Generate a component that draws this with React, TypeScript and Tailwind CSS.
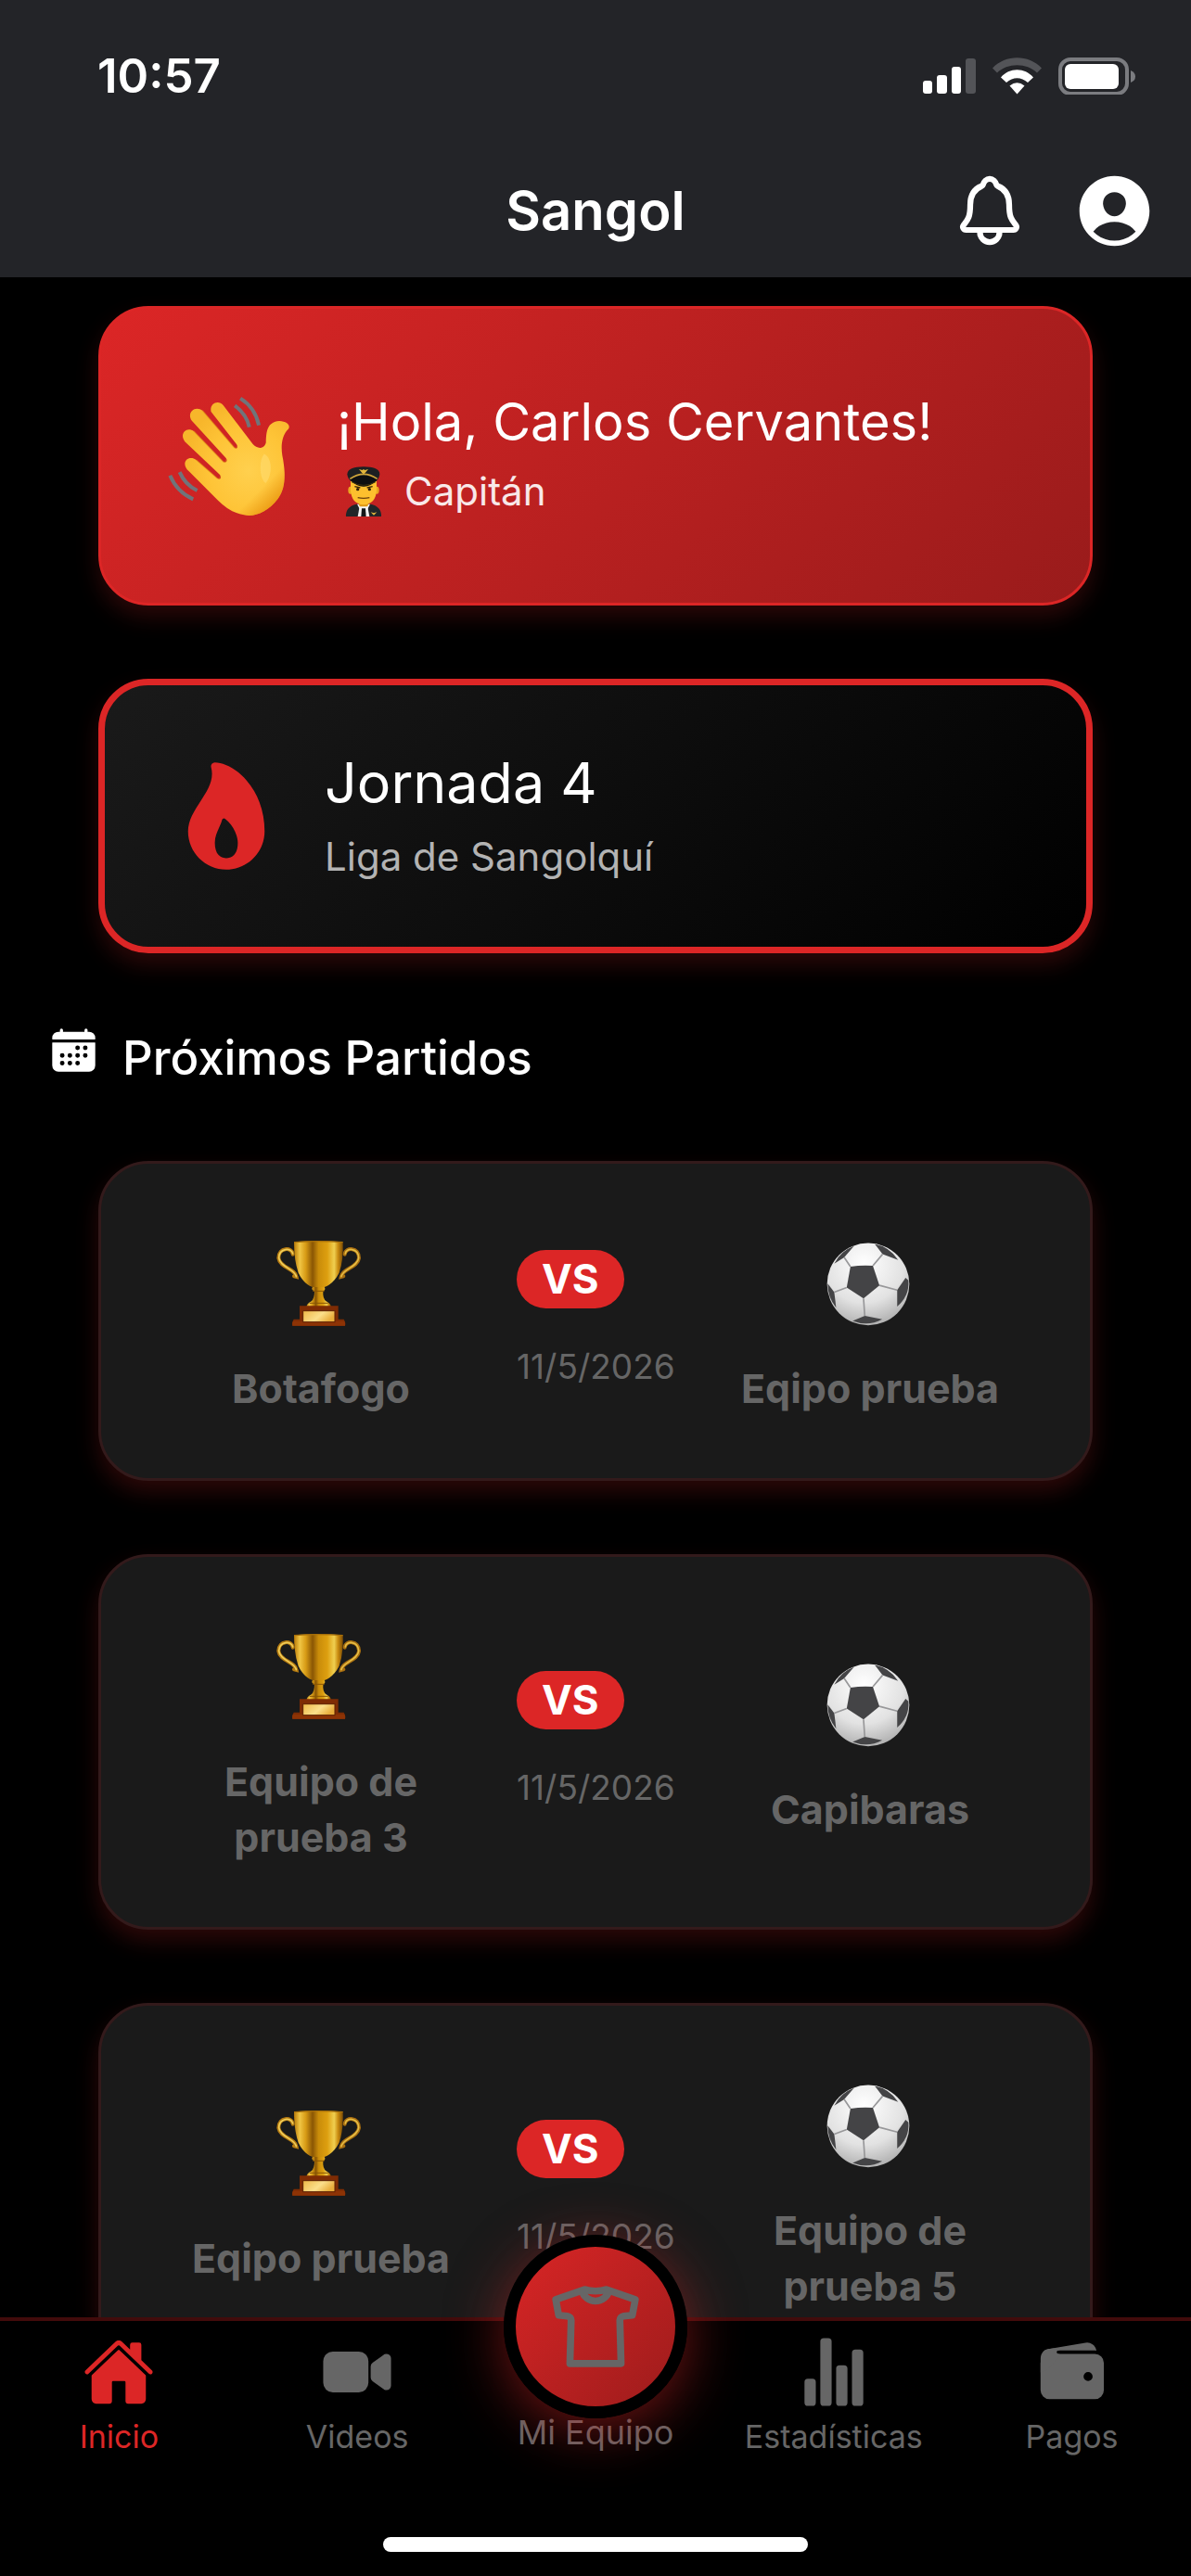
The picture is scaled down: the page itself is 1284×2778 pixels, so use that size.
import type {ComponentType} from 'react';
import {
  IoCalendar,
  IoFlame,
  IoHome,
  IoNotificationsOutline,
  IoPersonCircle,
  IoShirtOutline,
  IoStatsChart,
  IoVideocam,
  IoWallet,
} from 'react-icons/io5';

type Match = {
  id: number;
  home: string;
  away: string;
  date: string;
};

const matches: Match[] = [
  {id: 1, home: 'Botafogo', away: 'Eqipo prueba', date: '11/5/2026'},
  {id: 2, home: 'Equipo de prueba 3', away: 'Capibaras', date: '11/5/2026'},
  {id: 3, home: 'Eqipo prueba', away: 'Equipo de prueba 5', date: '11/5/2026'},
];

function StatusIcons() {
  return (
    <svg viewBox="0 0 230 40" className="w-[230px] h-10" aria-hidden="true">
      <g fill="#fff">
        <rect x="1" y="25" width="10" height="14" rx="3" />
        <rect x="16" y="19" width="11" height="20" rx="3" />
        <rect x="32" y="10" width="10" height="29" rx="3" />
        <rect x="47" y="1" width="11" height="38" rx="3" fill="#535458" />
      </g>
      <path
        d="M76 11.5 C90 -3.500 115 -3.500 129 11.500 L124 16.500 C113 5.500 92 5.500 81 16.500 Z"
        fill="#535458"
      />
      <path
        d="M85 21.500 C94 10.500 111 10.500 120 21.500 L114 27 C107 20.500 98 20.500 91 27 Z"
        fill="#fff"
      />
      <path d="M94.500 30.500 Q102.500 24 110.500 30.500 L102.500 39.500 Z" fill="#fff" />
      <rect x="149" y="2" width="72" height="37" rx="11" fill="none" stroke="#7b7c80" strokeWidth="4" />
      <rect x="154" y="7" width="58" height="27" rx="6" fill="#fff" />
      <path d="M225 14 Q230 16 230 20.500 Q230 25 225 27 Z" fill="#7b7c80" />
    </svg>
  );
}

function WavingHand() {
  return (
    <svg viewBox="60 75 400 395" className="w-[133px] h-[132px] shrink-0" role="img" aria-label="Hola">
      <defs>
        <radialGradient id="skin" cx="0.62" cy="0.6" r="0.62">
          <stop offset="0" stopColor="#ffd04e" />
          <stop offset="0.6" stopColor="#fec437" />
          <stop offset="1" stopColor="#f7b62b" />
        </radialGradient>
        <linearGradient id="palm" x1="0.4" y1="0.4" x2="0.85" y2="1">
          <stop offset="0.5" stopColor="#e38a05" stopOpacity="0" />
          <stop offset="1" stopColor="#e38a05" />
        </linearGradient>
      </defs>
      <path
        d="M203 128 C197 101 227 88 243 108 L338 233 C352 250 376 250 381 228 C382 190 385 162 424 158 C450 159 461 172 454 184 C432 205 429 240 434 270 C445 325 446 375 420 410 C385 455 345 470 310 463 C280 459 250 440 225 415 L125 315 C106 291 130 267 156 285 L222 343 C232 351 240 342 230 331 L118 225 C99 200 123 174 148 192 L242 290 C251 296 259 288 250 277 L140 157 C123 130 152 106 176 125 L278 244 C287 251 292 244 286 234 Z"
        fill="url(#skin)"
      />
      <path
        d="M381 228 C382 190 385 162 424 158 C450 159 461 172 454 184 C432 205 429 240 434 270 C445 325 446 375 420 410 C385 455 345 470 310 463 C280 459 250 440 225 415 L250 277 Z"
        fill="url(#palm)"
      />
      <path d="M375 265 C400 275 405 330 380 360 C362 350 355 290 375 265Z" fill="#ffdc70" opacity="0.6" />
      <g fill="none" stroke="#dd8d12" strokeWidth="4" opacity="0.45" strokeLinecap="round">
        <path d="M176 125 L278 244 Q287 250 287 240" />
        <path d="M148 192 L242 290 Q251 295 252 284" />
        <path d="M156 285 L222 343 Q232 350 233 338" />
      </g>
      <g fill="none" stroke="#70747a" strokeWidth="12">
        <path d="M298 85 Q346 115 358 172" />
        <path d="M280 108 Q319 138 327 178" />
        <path d="M70 335 Q92 388 145 412" />
        <path d="M101 324 Q119 365 158 384" />
      </g>
    </svg>
  );
}

function Pilot() {
  return (
    <svg viewBox="612 310 174 165" className="w-[58px] h-[55px] shrink-0" aria-hidden="true">
      <path d="M642 472 Q640 440 676 432 H722 Q758 440 756 472 Z" fill="#222629" />
      <path d="M678 432 L699 472 L720 432 Z" fill="#f4f4f4" />
      <path d="M686 440 L680 472 H718 L712 440 Z" fill="#f4f4f4" />
      <path d="M693 446 H705 L707 472 H691 Z" fill="#15181a" />
      <rect x="684" y="420" width="30" height="20" rx="8" fill="#e09a16" />
      <ellipse cx="656" cy="387" rx="7" ry="12" fill="#eba61f" />
      <ellipse cx="742" cy="387" rx="7" ry="12" fill="#eba61f" />
      <path d="M657 355 H741 V388 Q738 432 699 434 Q660 432 657 388 Z" fill="#fdc02e" />
      <path d="M646 336 Q646 312 699 311 Q752 312 751 336 Q748 352 738 359 H660 Q649 352 646 336 Z" fill="#1d2022" />
      <path d="M656 354 Q699 325 742 354 Q720 376 699 375 Q678 376 656 354 Z" fill="#0d0f10" />
      <path d="M655 350 Q699 320 743 350" fill="none" stroke="#cfa53a" strokeWidth="5" />
      <path d="M660 360 Q699 382 738 360" fill="none" stroke="#3c3210" strokeWidth="3" />
      <path d="M684 319 L695 322 L699 319 L703 322 L714 319 L704 331 L699 335 L694 331 Z" fill="#e2b63c" />
      <g stroke="#3a2708" strokeWidth="4" fill="none">
        <path d="M670 375 L688 379" />
        <path d="M710 379 L728 375" />
      </g>
      <circle cx="680" cy="384" r="5" fill="#35220a" />
      <circle cx="718" cy="384" r="5" fill="#35220a" />
      <path d="M680 411 Q699 415 718 411" stroke="#6b3f0c" strokeWidth="4" fill="none" />
      <path d="M722 458 L732 461 L742 458 L732 468 Z" fill="#e2b63c" />
    </svg>
  );
}

function Trophy() {
  return (
    <svg viewBox="85 83 276 282" className="w-[92px] h-[94px]" aria-hidden="true">
      <defs>
        <linearGradient id="cup" x1="0" x2="1">
          <stop offset="0" stopColor="#b97a08" />
          <stop offset="0.12" stopColor="#f0c544" />
          <stop offset="0.24" stopColor="#d79b15" />
          <stop offset="0.38" stopColor="#8a5604" />
          <stop offset="0.5" stopColor="#c98c0a" />
          <stop offset="0.68" stopColor="#dd9f10" />
          <stop offset="0.82" stopColor="#f0cf50" />
          <stop offset="0.9" stopColor="#c98b10" />
          <stop offset="1" stopColor="#7c4c05" />
        </linearGradient>
        <linearGradient id="plaque" x1="0" x2="1" y2="0.4">
          <stop offset="0" stopColor="#eeb947" />
          <stop offset="0.6" stopColor="#fbdf8b" />
          <stop offset="1" stopColor="#e9ae3c" />
        </linearGradient>
      </defs>
      <g fill="none" strokeLinecap="round">
        <path d="M138 130 C136 106 92 106 92 142 C96 174 146 176 150 203 L142 201" stroke="#b57b12" strokeWidth="12" />
        <path d="M138 128 C134 108 94 108 93 142 C97 172 146 178 149 202" stroke="#f0cd58" strokeWidth="5" />
        <path d="M306 130 C308 106 352 106 352 142 C348 174 298 176 294 203 L302 201" stroke="#a96f10" strokeWidth="12" />
        <path d="M308 128 C310 108 350 108 351 142 C347 172 298 178 295 202" stroke="#e6bd45" strokeWidth="5" />
      </g>
      <path d="M142 90 Q221 84 300 90 Q302 150 288 190 Q262 238 221 239 Q180 238 156 190 Q142 150 142 90 Z" fill="url(#cup)" />
      <path d="M142 91 Q221 85 300 91" fill="none" stroke="#a97009" strokeWidth="4" />
      <path
        d="M202 236 H240 Q246 244 236 250 Q234 272 246 282 Q262 290 262 302 H182 Q182 290 198 282 Q208 272 208 250 Q196 244 202 236 Z"
        fill="url(#cup)"
      />
      <path d="M203 249 H240 M192 288 H252" stroke="#8a5606" strokeWidth="3" />
      <path d="M160 297 H285 V340 H303 Q310 352 307 361 H137 Q134 352 141 340 H160 Z" fill="#7e2c04" />
      <path d="M137 361 Q134 353 139 346 H305 Q309 353 307 361 Z" fill="#8d3305" />
      <rect x="171" y="313" width="103" height="36" fill="url(#plaque)" stroke="#5c2003" strokeWidth="3" />
    </svg>
  );
}

function SoccerBall() {
  return (
    <svg viewBox="63 88 268 270" className="w-[90px] h-[91px]" aria-hidden="true">
      <defs>
        <radialGradient id="leather" cx="0.45" cy="0.25" r="0.8">
          <stop offset="0" stopColor="#fff" />
          <stop offset="0.6" stopColor="#e2e2e2" />
          <stop offset="1" stopColor="#a9a9a9" />
        </radialGradient>
      </defs>
      <circle cx="197" cy="224" r="132" fill="url(#leather)" />
      <g fill="#444446">
        <path d="M140 168 Q176 162 212 165 L233 228 L182 270 L128 235 Z" />
        <path d="M152 101 L120 138 L88 158 Q108 118 152 101 Z" />
        <path d="M218 95 L243 128 L293 146 Q265 104 218 95 Z" />
        <path d="M317 204 L290 243 L290 296 Q330 262 326 212 Z" />
        <path d="M186 326 L242 337 Q196 361 147 342 Z" />
        <path d="M67 222 L88 250 L94 300 Q66 264 67 222 Z" />
      </g>
      <g fill="none" stroke="#98989a" strokeWidth="5">
        <path d="M140 168 L120 138 M212 165 L243 128 M233 228 L290 243 M182 270 L186 326 M128 235 L88 250" />
      </g>
    </svg>
  );
}

function Team({name, icon: Icon}: {name: string; icon: ComponentType}) {
  return (
    <div className="flex flex-col items-center gap-[18px] px-10">
      <div className="h-[127px] flex items-center pr-1 pb-[3px]">
        <Icon />
      </div>
      <p className="text-[43px] leading-[60px] font-bold text-[#666] text-center">{name}</p>
    </div>
  );
}

function MatchCard({match}: {match: Match}) {
  return (
    <li className="grid grid-cols-[1fr_170px_1fr] items-center rounded-[54px] border-3 border-[#331a1b] bg-[#1a1a1a] px-[26px] py-[67px] shadow-[0_12px_24px_rgba(220,38,38,0.2)]">
      <Team name={match.home} icon={Trophy} />
      <div className="flex flex-col items-start gap-9">
        <span className="rounded-full bg-[#dc2626] px-[27px] text-[44px] leading-[63px] font-bold text-white">VS</span>
        <time className="text-[37px] leading-[54px] text-[#666] whitespace-nowrap">{match.date}</time>
      </div>
      <Team name={match.away} icon={SoccerBall} />
    </li>
  );
}

function Tab({label, icon: Icon, active}: {label: string; icon: ComponentType<{className?: string}>; active?: boolean}) {
  return (
    <a
      href="#"
      aria-current={active ? 'page' : undefined}
      className={`flex flex-col items-center pt-4 ${active ? 'text-[#dc2626]' : 'text-[#666]'}`}>
      <Icon className="size-[78px]" />
      <span className="mt-[9px] text-[34px] leading-[44px]">{label}</span>
    </a>
  );
}

export default function App() {
  return (
    <div className="h-screen flex flex-col overflow-hidden bg-black font-['Inter','Liberation_Sans',sans-serif] text-white">
      <header className="bg-[#232428]">
        <div className="flex h-[155px] items-center justify-between pt-2 pl-[105px] pr-[60px]">
          <span className="text-[51px] leading-[60px] font-semibold">10:57</span>
          <StatusIcons />
        </div>
        <div className="grid h-36 grid-cols-[1fr_auto_1fr] items-center pr-9">
          <h1 className="col-start-2 pl-9 text-[58px] leading-[72px] font-semibold">Sangol</h1>
          <div className="flex items-center justify-end gap-[46px]">
            <button type="button" aria-label="Notificaciones">
              <IoNotificationsOutline className="size-[84px] [&_path]:stroke-[38px]" />
            </button>
            <button type="button" aria-label="Perfil">
              <IoPersonCircle className="size-[93px]" />
            </button>
          </div>
        </div>
      </header>

      <main className="min-h-0 flex-1 overflow-hidden pt-[31px]">
        <section className="mx-[106px] flex items-center gap-[50px] rounded-[54px] border-3 border-[#dc2626] bg-[linear-gradient(135deg,#dc2626,#991b1b)] px-[71px] py-[86px] shadow-[0_12px_24px_rgba(220,38,38,0.2)]">
          <WavingHand />
          <div className="flex flex-col gap-[5px]">
            <h2 className="text-[56px] leading-[72px]">¡Hola, Carlos Cervantes!</h2>
            <p className="flex items-center gap-[15px] text-[42px] leading-[68px] text-white/90">
              <Pilot />
              Capitán
            </p>
          </div>
        </section>

        <section className="mx-[106px] mt-[79px] flex items-center gap-10 rounded-[54px] border-7 border-[#dc2626] bg-[linear-gradient(135deg,#1a1a1a,#000)] px-[65px] py-[65px] shadow-[0_12px_24px_rgba(220,38,38,0.2)]">
          <IoFlame className="size-[132px] shrink-0 text-[#dc2626]" />
          <div className="flex flex-col gap-2">
            <h2 className="text-[61px] leading-[80px]">Jornada 4</h2>
            <p className="text-[42px] leading-[64px] text-[#b3b3b3]">Liga de Sangolquí</p>
          </div>
        </section>

        <h2 className="mt-[77px] mb-[75px] flex items-center gap-[26px] pl-[53px] text-[51px] leading-[72px] font-medium">
          <IoCalendar className="mb-[18px] size-[53px]" />
          Próximos Partidos
        </h2>

        <ul className="mx-[106px] flex flex-col gap-[79px]">
          {matches.map((match) => (
            <MatchCard key={match.id} match={match} />
          ))}
        </ul>
      </main>

      <nav className="relative border-t-4 border-[#420b0b] bg-black">
        <div className="grid grid-cols-5">
          <Tab label="Inicio" icon={IoHome} active />
          <Tab label="Videos" icon={IoVideocam} />
          <a href="#" className="relative flex flex-col items-center pt-[98px] text-[#666]">
            <span className="text-[36px] leading-[44px] whitespace-nowrap">Mi Equipo</span>
            {/* raised button sits half above the bar */}
            <span className="absolute -top-[93px] flex size-[198px] items-center justify-center rounded-full border-[13px] border-black bg-[linear-gradient(135deg,#dc2626,#991b1b)] bg-origin-border shadow-[0_12px_60px_rgba(220,38,38,0.5)]">
              <IoShirtOutline className="size-[98px] [&_path]:stroke-[40px]" />
            </span>
          </a>
          <Tab label="Estadísticas" icon={IoStatsChart} />
          <Tab label="Pagos" icon={IoWallet} />
        </div>
        <div className="mx-auto mt-[86px] mb-[26px] h-4 w-[458px] rounded-full bg-white" />
      </nav>
    </div>
  );
}
